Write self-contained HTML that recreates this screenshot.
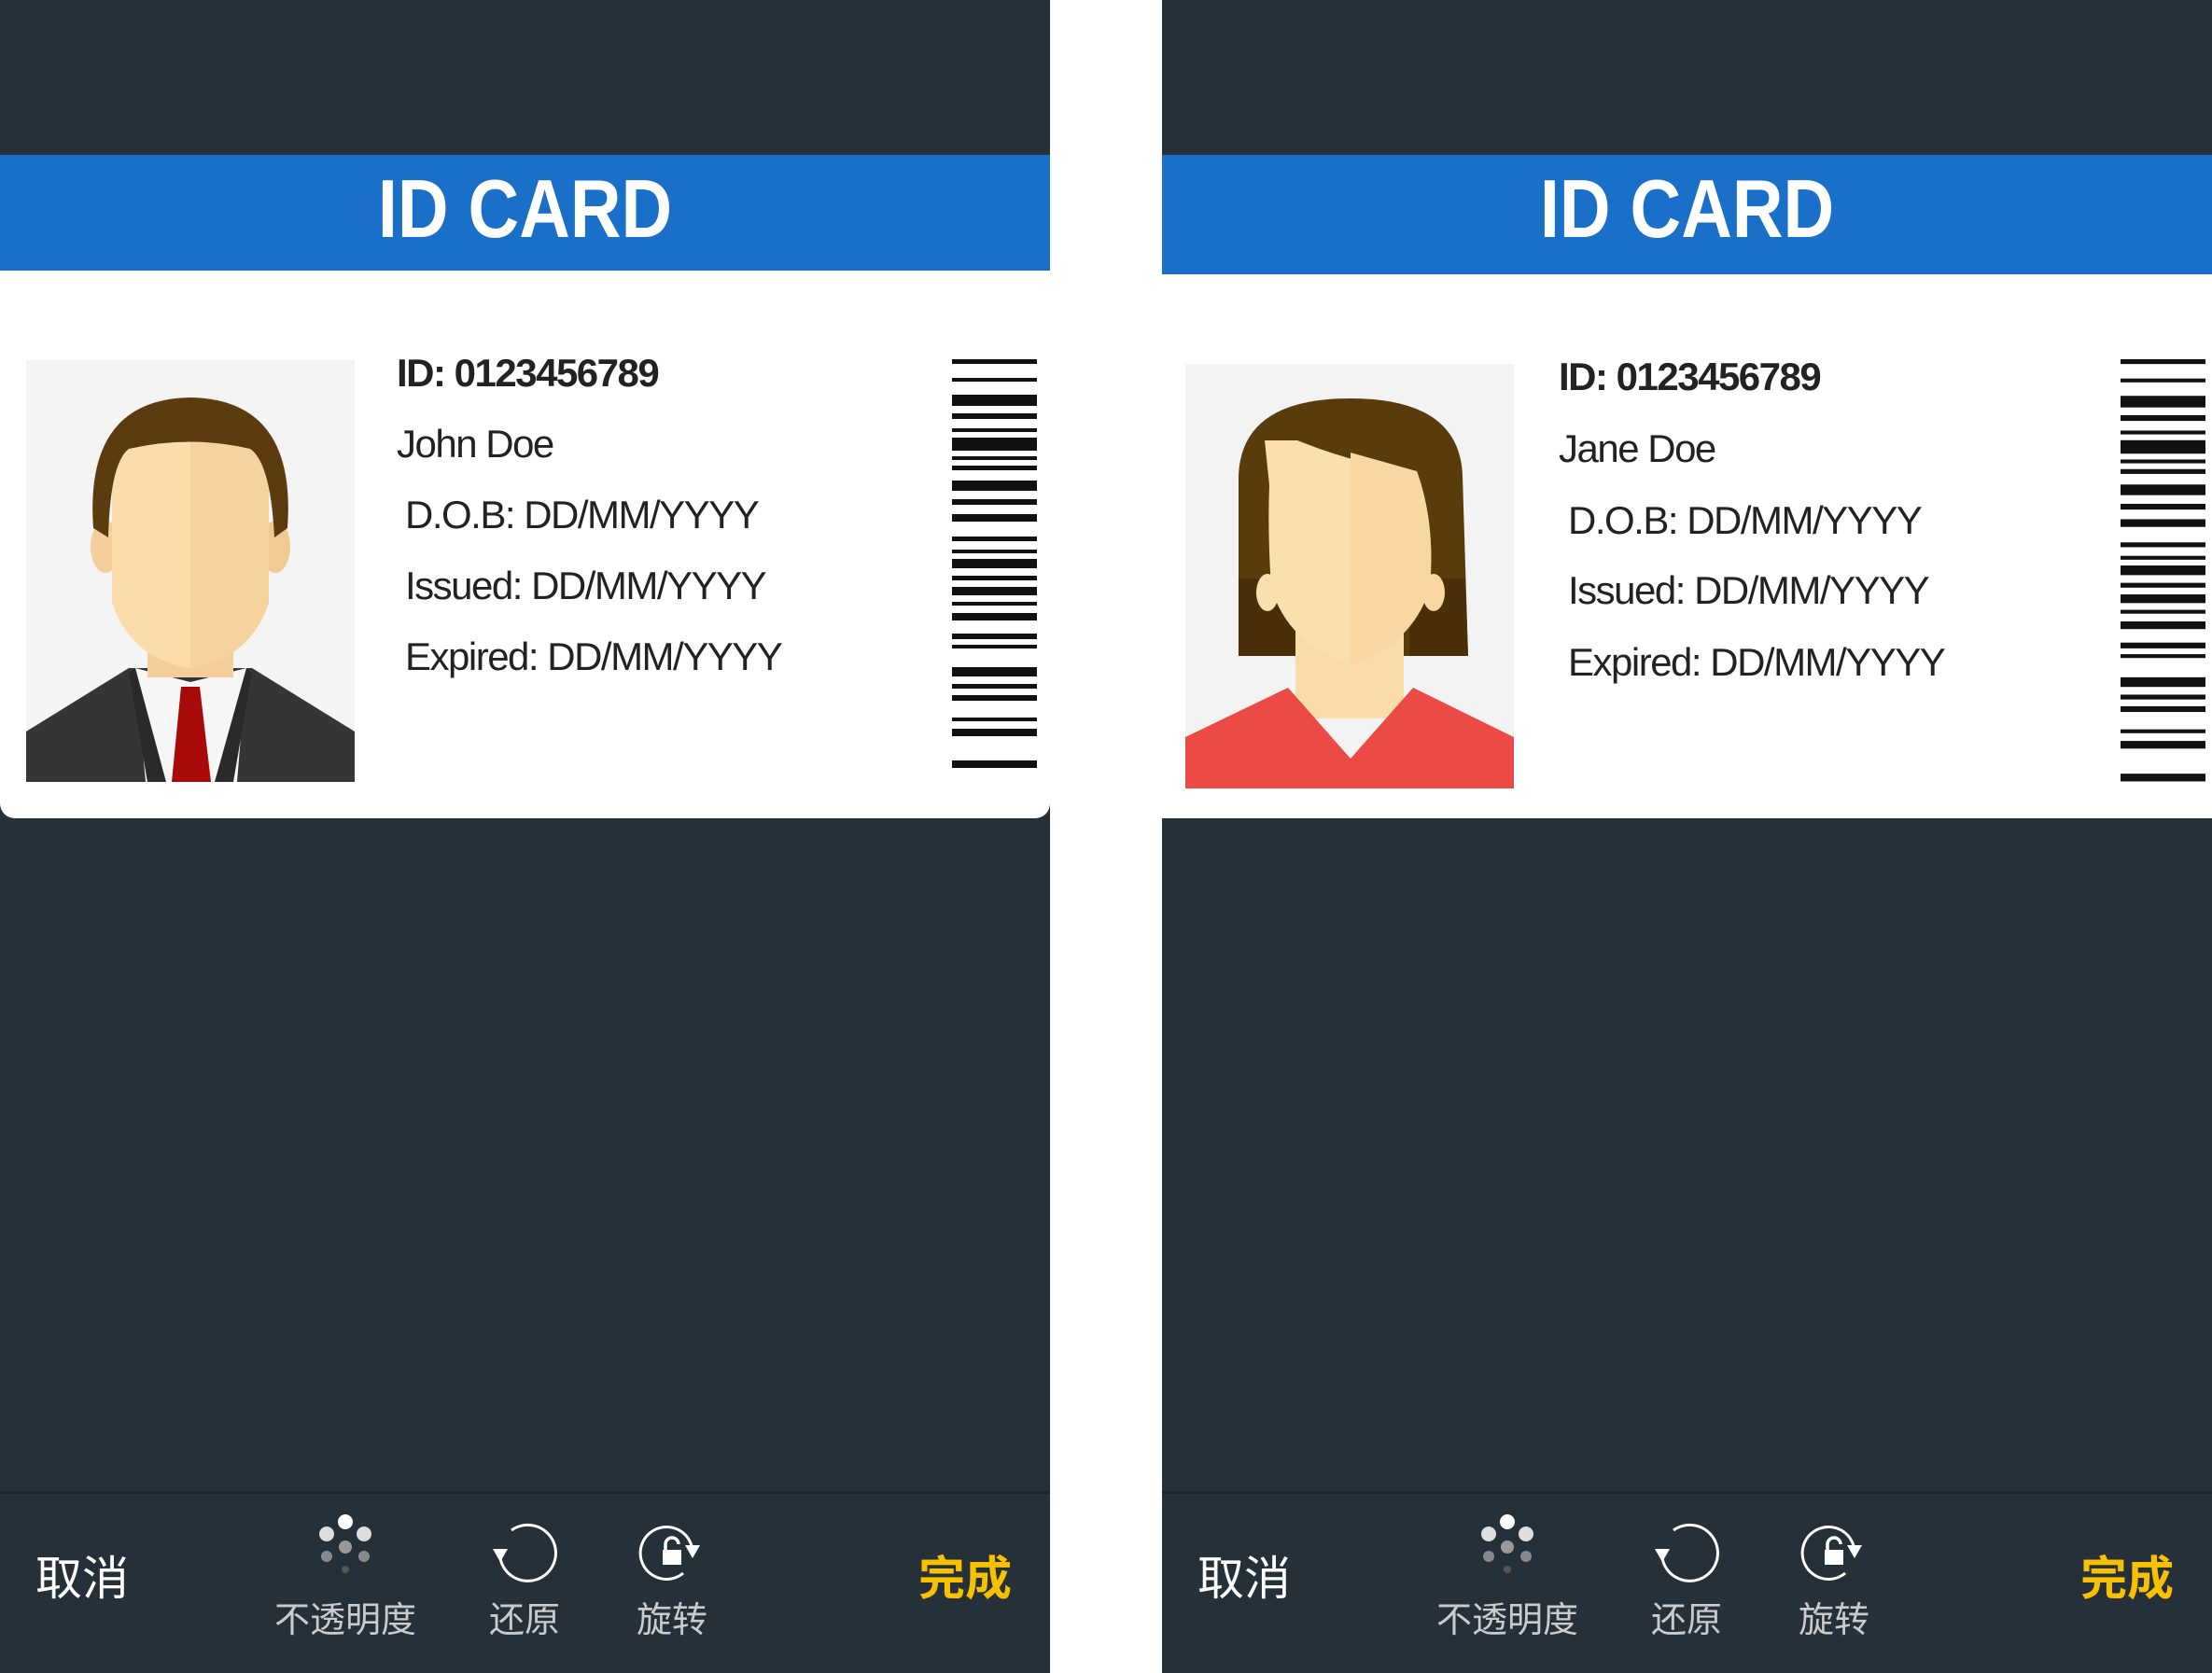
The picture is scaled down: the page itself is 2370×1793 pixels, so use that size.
<!DOCTYPE html>
<html><head><meta charset="utf-8"><style>
*{margin:0;padding:0;box-sizing:border-box}
body{width:2370px;height:1793px;background:#fff;position:relative;overflow:hidden;font-family:"Liberation Sans","Noto Sans CJK SC",sans-serif}
.panel{position:absolute;top:0;width:1125px;height:1793px;background:#263038}
.card{position:absolute;left:0;top:166px;width:1125px;height:711px;background:#fff;border-radius:0 0 16px 16px;overflow:hidden}
.bar{position:absolute;left:0;top:0;width:100%;height:124px;background:#1a6fc8}
.title{position:absolute;left:0;width:100%;top:6px;text-align:center;color:#fff;font-weight:bold;font-size:88px;line-height:104px;transform:scaleX(0.86)}
.t{position:absolute;color:#222;font-size:42px;white-space:nowrap;letter-spacing:-1.5px}
.sep{position:absolute;left:0;top:1598px;width:100%;height:3px;background:#1d252b}
.lbl{position:absolute;color:#c9cbcc;font-size:38px;top:1705px;transform:translateX(-50%);white-space:nowrap}
.big{position:absolute;font-size:50px;top:1652px;white-space:nowrap}
svg{position:absolute}
</style></head><body>

<!-- LEFT PANEL -->
<div class="panel" style="left:0">
 <div class="card">
  <div class="bar"><div class="title">ID CARD</div></div>
  <svg style="left:28px;top:220px" width="352" height="452" viewBox="0 0 352 452">
   <rect width="352" height="452" fill="#f4f4f4"/>
   <path d="M0 398 L110 330 L242 330 L352 398 L352 452 L0 452Z" fill="#353535"/>
   <path d="M117 330 L176 345 L236 330 L226 452 L128 452Z" fill="#f6f6f6"/>
   <path d="M166 350 L186 350 L198 452 L156 452Z" fill="#a80a0a"/>
   <path d="M117 330 L150 452 L130 452 L110 335Z M236 330 L202 452 L222 452 L242 335Z" fill="#2a2a2a"/>
   <rect x="130" y="260" width="92" height="80" fill="#f4cf9c"/>
   <ellipse cx="85" cy="200" rx="16" ry="28" fill="#f4cf9c"/>
   <ellipse cx="267" cy="200" rx="16" ry="28" fill="#f1c993"/>
   <path d="M92 140 Q92 40 176 40 Q260 40 260 140 L260 260 Q240 320 176 330 Q112 320 92 260Z" fill="#fbdcaa"/>
   <path d="M176 40 Q260 40 260 140 L260 260 Q240 320 176 330Z" fill="#f6d29e"/>
   <path d="M72 180 Q62 42 176 40 Q290 42 280 180 L266 190 Q262 110 240 95 Q176 80 110 95 Q90 110 88 190Z" fill="#5c3c0e"/>
  </svg>
  <div class="t" style="left:425px;top:210px;font-weight:bold">ID: 0123456789</div>
  <div class="t" style="left:425px;top:286px">John Doe</div>
  <div class="t" style="left:434px;top:362px">D.O.B: DD/MM/YYYY</div>
  <div class="t" style="left:434px;top:438px">Issued: DD/MM/YYYY</div>
  <div class="t" style="left:434px;top:514px">Expired: DD/MM/YYYY</div>
  <svg style="left:1020px;top:219px" width="91" height="455" viewBox="0 0 91 455" fill="#111">
   <rect y="0" width="91" height="5"/><rect y="20" width="91" height="4"/><rect y="38" width="91" height="12"/><rect y="58" width="91" height="6"/><rect y="74" width="91" height="4"/><rect y="84" width="91" height="14"/><rect y="104" width="91" height="4"/><rect y="114" width="91" height="5"/><rect y="130" width="91" height="11"/><rect y="150" width="91" height="6"/><rect y="166" width="91" height="8"/><rect y="190" width="91" height="5"/><rect y="204" width="91" height="4"/><rect y="214" width="91" height="10"/><rect y="232" width="91" height="5"/><rect y="244" width="91" height="9"/><rect y="260" width="91" height="4"/><rect y="272" width="91" height="8"/><rect y="294" width="91" height="6"/><rect y="306" width="91" height="4"/><rect y="330" width="91" height="10"/><rect y="348" width="91" height="5"/><rect y="360" width="91" height="6"/><rect y="384" width="91" height="4"/><rect y="396" width="91" height="8"/><rect y="430" width="91" height="8"/>
  </svg>
 </div>
 <div class="sep"></div>
 <div class="big" style="left:38px;color:#fff">取消</div>
 <div class="big" style="left:984px;color:#f7c000;font-weight:bold">完成</div>
 <svg style="left:330px;top:1620px" width="80" height="80" viewBox="0 0 80 80">
  <circle cx="40" cy="11" r="8" fill="#fff"/><circle cx="20" cy="24" r="8" fill="#ddd"/><circle cx="60" cy="24" r="8" fill="#ddd"/>
  <circle cx="40" cy="38" r="7" fill="#999"/><circle cx="20" cy="48" r="6" fill="#888"/><circle cx="60" cy="48" r="6" fill="#888"/><circle cx="40" cy="62" r="4" fill="#555"/>
 </svg>
 <svg style="left:522px;top:1630px" width="80" height="68" viewBox="0 0 80 68" fill="none" stroke="#fff" stroke-width="3">
  <path d="M14 40 A30 30 0 1 0 26 10"/><path d="M6 30 L14 44 L22 30Z" fill="#fff" stroke="none"/>
 </svg>
 <svg style="left:680px;top:1628px" width="80" height="70" viewBox="0 0 80 70" fill="none" stroke="#fff" stroke-width="3">
  <path d="M62 34 A28 28 0 1 0 52 58"/><path d="M54 28 L62 42 L70 28Z" fill="#fff" stroke="none"/>
  <rect x="30" y="33" width="20" height="16" fill="#fff" stroke="none"/><path d="M33 33 V27 A7 7 0 0 1 47 27" stroke-width="3.5"/>
 </svg>
 <div class="lbl" style="left:370px">不透明度</div>
 <div class="lbl" style="left:562px">还原</div>
 <div class="lbl" style="left:720px">旋转</div>
</div>

<!-- RIGHT PANEL -->
<div class="panel" style="left:1245px">
 <div class="card" style="border-radius:0">
  <div class="bar" style="height:128px"><div class="title">ID CARD</div></div>
  <svg style="left:25px;top:224px" width="352" height="455" viewBox="0 0 352 455">
   <rect width="352" height="455" fill="#f3f3f3"/>
   <path d="M57 120 Q60 37 177 37 Q294 37 297 120 L303 313 L57 313Z" fill="#5a3c0c"/>
   <path d="M57 230 L57 313 L120 313 L120 230Z M240 230 L240 313 L303 313 L300 230Z" fill="#4a2f08"/>
   <rect x="118" y="280" width="116" height="100" fill="#fadcab"/>
   <path d="M0 400 L110 347 L177 423 L244 347 L352 400 L352 455 L0 455Z" fill="#ec4a45"/>
   <path d="M85 82 L90 130 Q88 180 92 240 Q110 300 177 323 Q244 300 262 240 Q268 170 248 115 Q190 110 120 82Z" fill="#fbdfaf"/>
   <path d="M177 95 L248 115 Q268 170 262 240 Q244 300 177 323Z" fill="#f8d7a2"/>
   <ellipse cx="88" cy="245" rx="12" ry="20" fill="#fbdfaf"/><ellipse cx="266" cy="245" rx="12" ry="20" fill="#f8d7a2"/>
  </svg>
  <div class="t" style="left:425px;top:214px;font-weight:bold">ID: 0123456789</div>
  <div class="t" style="left:425px;top:291px">Jane Doe</div>
  <div class="t" style="left:435px;top:368px">D.O.B: DD/MM/YYYY</div>
  <div class="t" style="left:435px;top:443px">Issued: DD/MM/YYYY</div>
  <div class="t" style="left:435px;top:520px">Expired: DD/MM/YYYY</div>
  <svg style="left:1027px;top:219px" width="91" height="470" viewBox="0 0 91 455" preserveAspectRatio="none" fill="#111">
   <rect y="0" width="91" height="5"/><rect y="20" width="91" height="4"/><rect y="38" width="91" height="12"/><rect y="58" width="91" height="6"/><rect y="74" width="91" height="4"/><rect y="84" width="91" height="14"/><rect y="104" width="91" height="4"/><rect y="114" width="91" height="5"/><rect y="130" width="91" height="11"/><rect y="150" width="91" height="6"/><rect y="166" width="91" height="8"/><rect y="190" width="91" height="5"/><rect y="204" width="91" height="4"/><rect y="214" width="91" height="10"/><rect y="232" width="91" height="5"/><rect y="244" width="91" height="9"/><rect y="260" width="91" height="4"/><rect y="272" width="91" height="8"/><rect y="294" width="91" height="6"/><rect y="306" width="91" height="4"/><rect y="330" width="91" height="10"/><rect y="348" width="91" height="5"/><rect y="360" width="91" height="6"/><rect y="384" width="91" height="4"/><rect y="396" width="91" height="8"/><rect y="430" width="91" height="8"/>
  </svg>
 </div>
 <div class="sep"></div>
 <div class="big" style="left:38px;color:#fff">取消</div>
 <div class="big" style="left:984px;color:#f7c000;font-weight:bold">完成</div>
 <svg style="left:330px;top:1620px" width="80" height="80" viewBox="0 0 80 80">
  <circle cx="40" cy="11" r="8" fill="#fff"/><circle cx="20" cy="24" r="8" fill="#ddd"/><circle cx="60" cy="24" r="8" fill="#ddd"/>
  <circle cx="40" cy="38" r="7" fill="#999"/><circle cx="20" cy="48" r="6" fill="#888"/><circle cx="60" cy="48" r="6" fill="#888"/><circle cx="40" cy="62" r="4" fill="#555"/>
 </svg>
 <svg style="left:522px;top:1630px" width="80" height="68" viewBox="0 0 80 68" fill="none" stroke="#fff" stroke-width="3">
  <path d="M14 40 A30 30 0 1 0 26 10"/><path d="M6 30 L14 44 L22 30Z" fill="#fff" stroke="none"/>
 </svg>
 <svg style="left:680px;top:1628px" width="80" height="70" viewBox="0 0 80 70" fill="none" stroke="#fff" stroke-width="3">
  <path d="M62 34 A28 28 0 1 0 52 58"/><path d="M54 28 L62 42 L70 28Z" fill="#fff" stroke="none"/>
  <rect x="30" y="33" width="20" height="16" fill="#fff" stroke="none"/><path d="M33 33 V27 A7 7 0 0 1 47 27" stroke-width="3.5"/>
 </svg>
 <div class="lbl" style="left:370px">不透明度</div>
 <div class="lbl" style="left:562px">还原</div>
 <div class="lbl" style="left:720px">旋转</div>
</div>
</body></html>
